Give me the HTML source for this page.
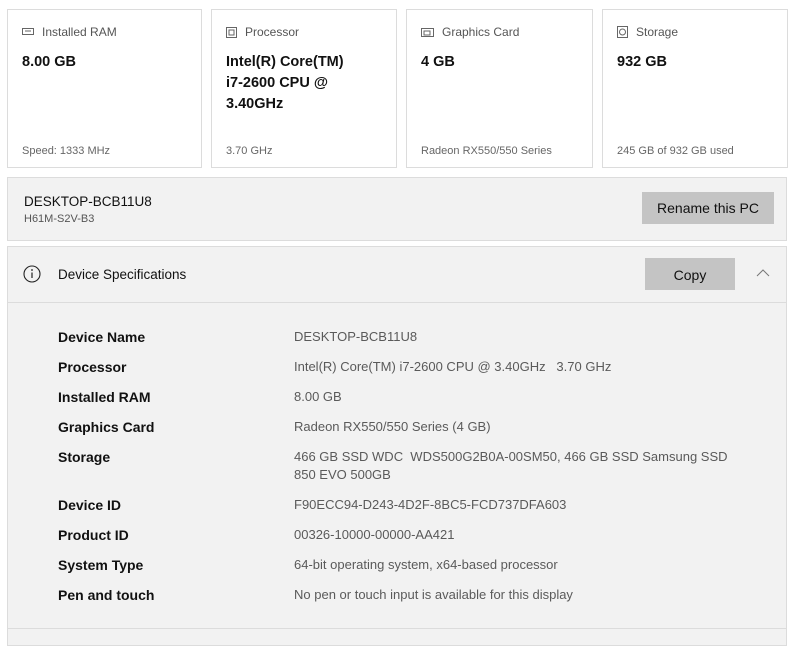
<!DOCTYPE html>
<html><head><meta charset="utf-8"><style>
*{box-sizing:border-box;margin:0;padding:0}
body{width:798px;height:639px;background:#fff;font-family:"Liberation Sans",sans-serif;color:#1a1a1a;position:relative;overflow:hidden}
.card{position:absolute;top:9px;height:159px;border:1px solid #dcdcdc;background:#fff}
.card .t{position:absolute;left:14px;top:15px;font-size:12px;color:#555;display:flex;align-items:center}
.card .t svg{margin-right:8px}
.card .v{position:absolute;left:14px;top:42px;font-size:14.5px;font-weight:bold;line-height:21px;color:#111}
.card .s{position:absolute;left:14px;top:135px;font-size:11px;color:#666}
.sec{position:absolute;left:7px;right:11px;background:#f2f2f2;border:1px solid #dcdcdc}
.btn{position:absolute;background:#c4c4c4;font-size:14px;color:#111;text-align:center}
.row{position:absolute;left:58px;font-size:14px;font-weight:bold;color:#111}
.val{position:absolute;left:294px;font-size:13px;color:#5a5a5a;line-height:18px}
</style></head><body>
<div class="card" style="left:7px;width:195px"><div class="t"><svg width="12" height="8"><rect x="0.5" y="0.5" width="11" height="6" fill="none" stroke="#666"/><line x1="3" y1="3" x2="9" y2="3" stroke="#666"/></svg>Installed RAM</div><div class="v">8.00 GB</div><div class="s">Speed: 1333 MHz</div></div>
<div class="card" style="left:211px;width:186px"><div class="t"><svg width="11" height="11"><rect x="0.5" y="0.5" width="10" height="10" fill="none" stroke="#666"/><rect x="3" y="3" width="5" height="5" fill="none" stroke="#666"/></svg>Processor</div><div class="v">Intel(R) Core(TM)<br>i7-2600 CPU @<br>3.40GHz</div><div class="s">3.70 GHz</div></div>
<div class="card" style="left:406px;width:187px"><div class="t"><svg width="13" height="9"><rect x="0.5" y="0.5" width="12" height="8" fill="none" stroke="#666"/><rect x="3" y="3" width="6" height="4" fill="none" stroke="#666"/></svg>Graphics Card</div><div class="v">4 GB</div><div class="s">Radeon RX550/550 Series</div></div>
<div class="card" style="left:602px;width:186px"><div class="t"><svg width="11" height="12"><rect x="0.5" y="0.5" width="10" height="11" fill="none" stroke="#666"/><circle cx="5.5" cy="6" r="3" fill="none" stroke="#666"/></svg>Storage</div><div class="v">932 GB</div><div class="s">245 GB of 932 GB used</div></div>

<div class="sec" style="top:177px;height:64px">
<div style="position:absolute;left:16px;top:16px;font-size:13.5px;color:#111">DESKTOP-BCB11U8</div>
<div style="position:absolute;left:16px;top:35px;font-size:11px;color:#555">H61M-S2V-B3</div>
<div class="btn" style="left:634px;top:14px;width:132px;height:32px;line-height:33px">Rename this PC</div>
</div>

<div class="sec" style="top:246px;height:400px">
<div style="position:absolute;left:0;right:0;top:55px;border-top:1px solid #dcdcdc"></div>
<svg style="position:absolute;left:15px;top:18px" width="18" height="18"><circle cx="9" cy="9" r="8" fill="none" stroke="#222" stroke-width="1.1"/><line x1="9" y1="7.5" x2="9" y2="13" stroke="#222" stroke-width="1.2"/><circle cx="9" cy="5" r="0.9" fill="#222"/></svg>
<div style="position:absolute;left:50px;top:20px;font-size:13.5px;color:#111">Device Specifications</div>
<div class="btn" style="left:637px;top:11px;width:90px;height:32px;line-height:34px">Copy</div>
<svg style="position:absolute;left:748px;top:22px" width="14" height="8"><polyline points="1,7 7,1 13,7" fill="none" stroke="#777"/></svg>
<div style="position:absolute;left:0;right:0;top:381px;border-top:1px solid #dcdcdc"></div>
</div>

<div class="row" style="top:329px">Device Name</div><div class="val" style="top:328px">DESKTOP-BCB11U8</div>
<div class="row" style="top:359px">Processor</div><div class="val" style="top:358px">Intel(R) Core(TM) i7-2600 CPU @ 3.40GHz&nbsp;&nbsp;&nbsp;3.70 GHz</div>
<div class="row" style="top:389px">Installed RAM</div><div class="val" style="top:388px">8.00 GB</div>
<div class="row" style="top:419px">Graphics Card</div><div class="val" style="top:418px">Radeon RX550/550 Series (4 GB)</div>
<div class="row" style="top:449px">Storage</div><div class="val" style="top:448px;width:445px">466 GB SSD WDC&nbsp;&nbsp;WDS500G2B0A-00SM50, 466 GB SSD Samsung SSD<br>850 EVO 500GB</div>
<div class="row" style="top:497px">Device ID</div><div class="val" style="top:496px">F90ECC94-D243-4D2F-8BC5-FCD737DFA603</div>
<div class="row" style="top:527px">Product ID</div><div class="val" style="top:526px">00326-10000-00000-AA421</div>
<div class="row" style="top:557px">System Type</div><div class="val" style="top:556px">64-bit operating system, x64-based processor</div>
<div class="row" style="top:587px">Pen and touch</div><div class="val" style="top:586px">No pen or touch input is available for this display</div>
</body></html>
